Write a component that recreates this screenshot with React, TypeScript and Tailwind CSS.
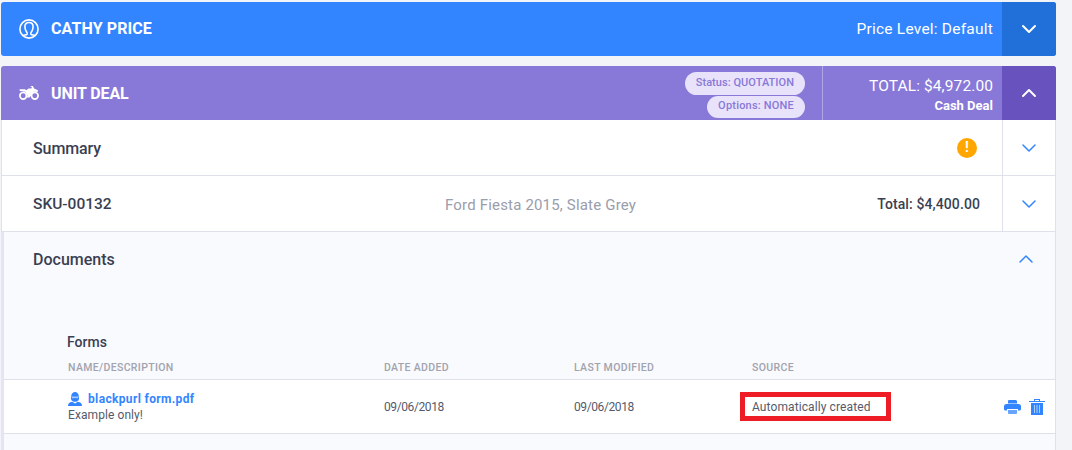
import { ChevronDown, ChevronUp } from "lucide-react";

function Lotus() {
  return (
    <svg width="20" height="20" viewBox="0 0 20 20" fill="none" stroke="white" strokeWidth="1.6">
      <circle cx="10" cy="10" r="9.1" />
      <path d="M3.800 16.600c1.500-.7 3.600-.4 4.300-1.400.6-.9-.2-1.800-.9-2.900C6.400 11 5.900 9.500 5.900 7.800c0-2.700 1.800-4.300 4.100-4.300s4.100 1.600 4.100 4.300c0 1.700-.5 3.200-1.300 4.500-.7 1.100-1.500 2-.9 2.900.7 1 2.800.7 4.300 1.400" />
    </svg>
  );
}

function Moto() {
  return (
    <svg width="20" height="14" viewBox="0 0 20 14" fill="white">
      <circle cx="4.200" cy="9.800" r="3.300" fill="none" stroke="white" strokeWidth="1.700" />
      <circle cx="15.800" cy="9.800" r="3.300" fill="none" stroke="white" strokeWidth="1.700" />
      <path d="M.5 3.200h5.300l1.500 1 2.200-1.700h2.800l.6-1.500-1.400-.5V0h2.400l1.200 2.600L19 4.300l-.4 1.700-3.800-.3-2.800 3.800-1.500 2H7.800l.7-2.200-2.300-3.600L.8 5z" />
    </svg>
  );
}

function Agent() {
  return (
    <svg width="14" height="14" viewBox="0 0 14 14" fill="#3385ff">
      <path d="M3.200 4.600C3.200 1.500 5 0 7 0s3.800 1.500 3.800 4.600z" />
      <path d="M3 4.600h8v2.300c-.4 1.800-2 2.900-4 2.900S3.400 8.700 3 6.900z" />
      <path d="M3.800 5h6.400v.9c-1 .5-2 .1-3.200.1s-2.200.4-3.200-.1z" fill="#a9ccff" />
      <path d="M0 14c0-2.600 1.500-3.800 4.200-4.300L7 11.500l2.800-1.800c2.700.5 4.200 1.700 4.200 4.300z" />
    </svg>
  );
}

function Printer() {
  return (
    <svg width="17" height="14" viewBox="0 0 17 14" fill="#3385ff">
      <path d="M4 1a1 1 0 0 1 1-1h7l1 1v2.500H4z" />
      <path d="M2.500 4h12A2.500 2.500 0 0 1 17 6.500V9a1.500 1.500 0 0 1-1.500 1.500H14V9H3v1.500H1.500A1.500 1.500 0 0 1 0 9V6.500A2.500 2.500 0 0 1 2.500 4z" />
      <path d="M4 10h9v3a1 1 0 0 1-1 1H5a1 1 0 0 1-1-1z" opacity="0.75" />
    </svg>
  );
}

function Trash() {
  return (
    <svg width="16" height="16" viewBox="0 0 16 16" fill="#3385ff">
      <path d="M5 2V0h6v2h5v1H0V2zm1-1v1h4V1z" />
      <path d="M2 4h12v12H2z" />
      <path d="M5 6h1v8H5zM7.500 6h1v8h-1zM10 6h1v8h-1z" fill="#a9ccff" />
    </svg>
  );
}

export default function App() {
  return (
    <div className="w-[1072px] h-[450px] overflow-hidden bg-[#f3f4f7] pt-[2px] pl-[1px] font-['Roboto','Liberation_Sans',sans-serif]">
      <div className="w-[1055px]">
        <div className="flex h-[54px] items-stretch rounded-[3px] overflow-hidden bg-[#3385ff] text-white">
          <div className="flex flex-1 items-center pl-[18px] gap-[12px]">
            <Lotus />
            <span className="text-[16px] font-bold tracking-[0.1px]">CATHY PRICE</span>
          </div>
          <div className="flex items-center pt-[2px] pr-[9px] text-[15.5px] tracking-[0.22px]">Price Level: Default</div>
          <div className="flex w-[54px] items-center justify-center bg-[#216fd9]">
            <ChevronDown size={24} strokeWidth={2} />
          </div>
        </div>

        <div className="mt-[10px] flex h-[54px] items-stretch rounded-t-[3px] overflow-hidden bg-[#8878d8] text-white">
          <div className="flex flex-1 items-center pl-[18px] gap-[12px]">
            <Moto />
            <span className="pt-[2px] text-[16px] font-bold -tracking-[0.1px]">UNIT DEAL</span>
          </div>
          <div className="flex flex-col items-end gap-[1px] justify-center pt-[3px] pr-[17px] text-[11px] font-medium text-[#8878d8]">
            <span className="flex h-[23px] items-center rounded-full bg-[#e8e3fb] px-[11px] tracking-[0.05px]">Status: QUOTATION</span>
            <span className="flex h-[22px] items-center rounded-full bg-[#e8e3fb] px-[11px] tracking-[0.2px]">Options: NONE</span>
          </div>
          <div className="flex w-[180px] flex-col items-end justify-center border-l border-[#b0a5e6] pt-[3px] pr-[9px]">
            <span className="text-[15.5px] leading-[22px] tracking-[0.1px]">TOTAL: $4,972.00</span>
            <span className="text-[13px] font-bold leading-[18px]">Cash Deal</span>
          </div>
          <div className="flex w-[54px] items-center justify-center bg-[#6752be]">
            <ChevronUp size={24} strokeWidth={2} />
          </div>
        </div>

        <div className="border-x border-[#dfe1ea] bg-white">
          <div className="flex h-[56px] items-stretch border-b border-[#dfe1ea] text-[#3a3f52]">
            <div className="flex flex-1 items-center justify-between pl-[31px] pr-[25px]">
              <span className="pt-[3px] text-[16px] font-medium -tracking-[0.1px]">Summary</span>
              <span className="flex h-[20px] w-[20px] items-center justify-center rounded-full bg-[#ffa600] text-[14px] font-bold text-white">!</span>
            </div>
            <div className="flex w-[53px] items-center justify-center border-l border-[#dfe1ea] text-[#3385ff]">
              <ChevronDown size={24} strokeWidth={1.5} />
            </div>
          </div>
          <div className="flex h-[56px] items-stretch border-b border-[#dfe1ea] text-[#3a3f52]">
            <div className="grid flex-1 grid-cols-[412px_1fr_auto] items-center pl-[31px] pr-[22px]">
              <span className="pt-[3px] text-[15.5px] font-medium">SKU-00132</span>
              <span className="pt-[3px] text-[15px] tracking-[0.18px] text-[#9a9dab]">Ford Fiesta 2015, Slate Grey</span>
              <span className="pt-[1px] text-[14px] font-medium tracking-[0.1px]">Total: $4,400.00</span>
            </div>
            <div className="flex w-[53px] items-center justify-center border-l border-[#dfe1ea] text-[#3385ff]">
              <ChevronDown size={24} strokeWidth={1.5} />
            </div>
          </div>

          <div className="-ml-px h-[218px] border-l-[3px] border-[#e6e3f6] bg-[#f9fafd]">
            <div className="flex h-[54px] items-center justify-between pl-[29px] pr-[17px] text-[#3a3f52]">
              <span className="pt-[1px] text-[16px] font-medium">Documents</span>
              <ChevronUp size={24} strokeWidth={1.5} className="text-[#3385ff]" />
            </div>
            <div className="pt-[46px] pl-[63px] text-[14px] font-medium leading-[20px] text-[#3a3f52]">Forms</div>
            <div className="mt-[7px] grid h-[20px] grid-cols-[316px_190px_178px_1fr] pl-[64px] text-[10.5px] font-medium leading-[18px] tracking-[0.35px] text-[#a1a3af]">
              <span>NAME/DESCRIPTION</span>
              <span>DATE ADDED</span>
              <span>LAST MODIFIED</span>
              <span>SOURCE</span>
            </div>
            <div className="grid h-[55px] grid-cols-[316px_190px_178px_1fr] items-center border-y border-[#dfe1ea] bg-white pl-[64px] pr-[9px] text-[12px] text-[#555a6b]">
              <div className="pt-[1px]">
                <div className="flex items-center gap-[6px] text-[12px] font-bold leading-[15px] tracking-[0.35px] text-[#3385ff]">
                  <Agent />
                  <span>blackpurl form.pdf</span>
                </div>
                <div className="pt-[1px] leading-[15px] tracking-[0.08px]">Example only!</div>
              </div>
              <span className="tracking-[-0.4px]">09/06/2018</span>
              <span className="tracking-[-0.4px]">09/06/2018</span>
              <div className="flex items-center justify-between">
                <span className="-ml-[12px] flex h-[29px] w-[151px] items-center border-[5px] border-[#ee1c25] pl-[7px] tracking-[0.1px]">Automatically created</span>
                <div className="flex items-center gap-[8px] pr-[1px]">
                  <Printer />
                  <Trash />
                </div>
              </div>
            </div>
          </div>
        </div>
      </div>
    </div>
  );
}
